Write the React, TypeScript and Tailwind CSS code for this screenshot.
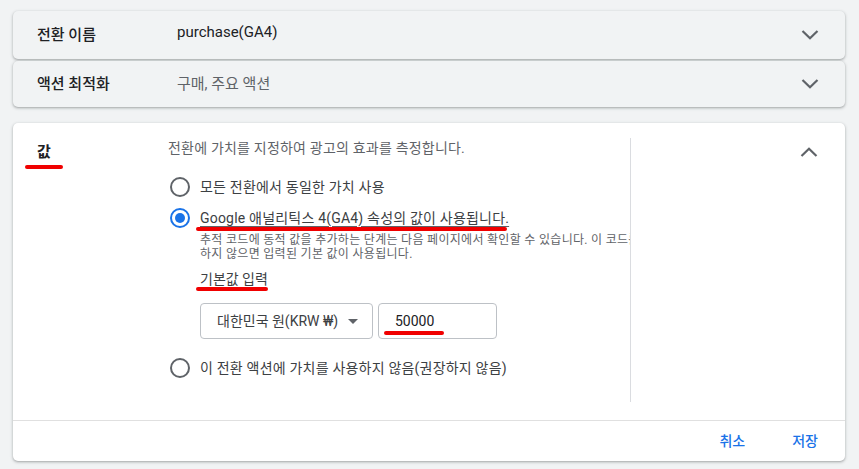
import React from "react";

const font = { fontFamily: 'Roboto, "Noto Sans CJK KR", "Noto Sans", sans-serif' };

function Chevron({ up = false }: { up?: boolean }) {
  return (
    <svg width="18" height="10" viewBox="0 0 18 10" className="block">
      <polyline
        points={up ? "1.5,9 9,1.8 16.5,9" : "1.5,1 9,8.2 16.5,1"}
        fill="none"
        stroke="#5f6368"
        strokeWidth="2.2"
      />
    </svg>
  );
}

function Radio({ checked = false }: { checked?: boolean }) {
  return (
    <span
      className={
        checked
          ? "flex h-[20px] w-[20px] shrink-0 items-center justify-center rounded-full border-2 border-[#1a73e8]"
          : "flex h-[20px] w-[20px] shrink-0 items-center justify-center rounded-full border-2 border-[#5f6368]"
      }
    >
      {checked && <span className="h-[10px] w-[10px] rounded-full bg-[#1a73e8]" />}
    </span>
  );
}

function RedMark({ className }: { className: string }) {
  return <span className={"pointer-events-none absolute h-[4px] rounded-full bg-[#f00000] " + className} />;
}

export default function App() {
  return (
    <div className="min-h-[469px] w-[859px] bg-[#f1f3f4] pl-[13px] pr-[14px] pt-[11px]" style={font}>
      {/* Collapsed card 1 */}
      <div className="flex h-[48px] items-center rounded-[5px] bg-[#f1f3f4] shadow-[0_1px_2px_rgba(60,64,67,0.3),0_1px_3px_1px_rgba(60,64,67,0.12)]">
        <div className="w-[164px] pl-[24px] text-[15px] font-medium text-[#202124]">전환 이름</div>
        <div className="flex-1 -translate-y-[3px] text-[15px] text-[#202124]">purchase(GA4)</div>
        <div className="pr-[26px]">
          <Chevron />
        </div>
      </div>
      {/* Collapsed card 2 */}
      <div className="mt-[2px] flex h-[46px] items-center rounded-[5px] bg-[#f1f3f4] shadow-[0_1px_2px_rgba(60,64,67,0.3),0_1px_3px_1px_rgba(60,64,67,0.12)]">
        <div className="w-[164px] pl-[24px] text-[15px] font-medium text-[#202124]">액션 최적화</div>
        <div className="flex-1 text-[15px] text-[#5f6368]">구매, 주요 액션</div>
        <div className="pr-[26px]">
          <Chevron />
        </div>
      </div>

      {/* Expanded card */}
      <div className="mt-[16px] rounded-[5px] bg-white shadow-[0_1px_2px_rgba(60,64,67,0.3),0_1px_3px_1px_rgba(60,64,67,0.12)]">
        <div className="flex pb-[18px] pt-[15px]">
          <div className="w-[155px] shrink-0 pl-[24px]">
            <div className="relative pt-[4px] text-[15px] font-bold leading-[20px] text-[#202124]">
              값
              <RedMark className="left-[-12px] top-[27px] w-[38px]" />
            </div>
          </div>
          <div className="w-[463px] shrink-0 border-r border-[#dadce0] pb-[23px]">
            <div className="h-[20px] text-[14px] leading-[20px] tracking-[0.2px] text-[#5f6368]">
              전환에 가치를 지정하여 광고의 효과를 측정합니다.
            </div>

            <div className="mt-[18px] flex h-[22px] items-center">
              <span className="ml-[2px]">
                <Radio />
              </span>
              <span className="ml-[10px] text-[14px] tracking-[0.2px] text-[#3c4043]">모든 전환에서 동일한 가치 사용</span>
            </div>

            <div className="mt-[9px] flex h-[22px] items-center">
              <span className="ml-[2px]">
                <Radio checked />
              </span>
              <span className="relative ml-[10px] text-[14px] tracking-[0.2px] text-[#3c4043] underline decoration-[#5f6368] underline-offset-[3px]">
                Google 애널리틱스 4(GA4) 속성의 값이 사용됩니다.
                <RedMark className="left-[-4px] top-[19px] w-[311px]" />
              </span>
            </div>

            <div className="mt-[4px] overflow-hidden pl-[32px] pr-[6px]">
              <div className="whitespace-nowrap text-[12px] leading-[14px] tracking-[0.3px] text-[#5f6368]">
                추적 코드에 동적 값을 추가하는 단계는 다음 페이지에서 확인할 수 있습니다. 이 코드를 추가
                <br />
                하지 않으면 입력된 기본 값이 사용됩니다.
              </div>
            </div>

            <div className="mt-[6px] pl-[32px]">
              <span className="relative inline-block text-[14px] leading-[20px] text-[#3c4043]">
                기본값 입력
                <RedMark className="left-[-4px] top-[18px] w-[72px]" />
              </span>
            </div>

            <div className="mt-[12px] flex gap-[5px] pl-[32px]">
              <div className="flex h-[36px] w-[173px] items-center justify-between rounded-[4px] border border-[#bdc1c6] pl-[16px] pr-[14px] text-[14px] text-[#3c4043]">
                <span>대한민국 원(KRW ₩)</span>
                <svg width="10" height="5" viewBox="0 0 10 5">
                  <polygon points="0,0 10,0 5,5" fill="#5f6368" />
                </svg>
              </div>
              <div className="relative flex h-[36px] w-[119px] items-center rounded-[4px] border border-[#bdc1c6] pl-[16px] text-[14px] text-[#202124]">
                50000
                <RedMark className="left-[5px] top-[27px] w-[60px]" />
              </div>
            </div>

            <div className="mt-[18px] flex h-[22px] items-center">
              <span className="ml-[2px]">
                <Radio />
              </span>
              <span className="ml-[10px] text-[14px] tracking-[0.2px] text-[#3c4043]">이 전환 액션에 가치를 사용하지 않음(권장하지 않음)</span>
            </div>
          </div>
          <div className="flex flex-1 justify-end pr-[27px] pt-[9px]">
            <Chevron up />
          </div>
        </div>
        <div className="flex h-[41px] items-center justify-end border-t border-[#e0e0e0] pr-[27px] text-[14px] font-medium text-[#1a73e8]">
          <span>취소</span>
          <span className="ml-[47px]">저장</span>
        </div>
      </div>
    </div>
  );
}
